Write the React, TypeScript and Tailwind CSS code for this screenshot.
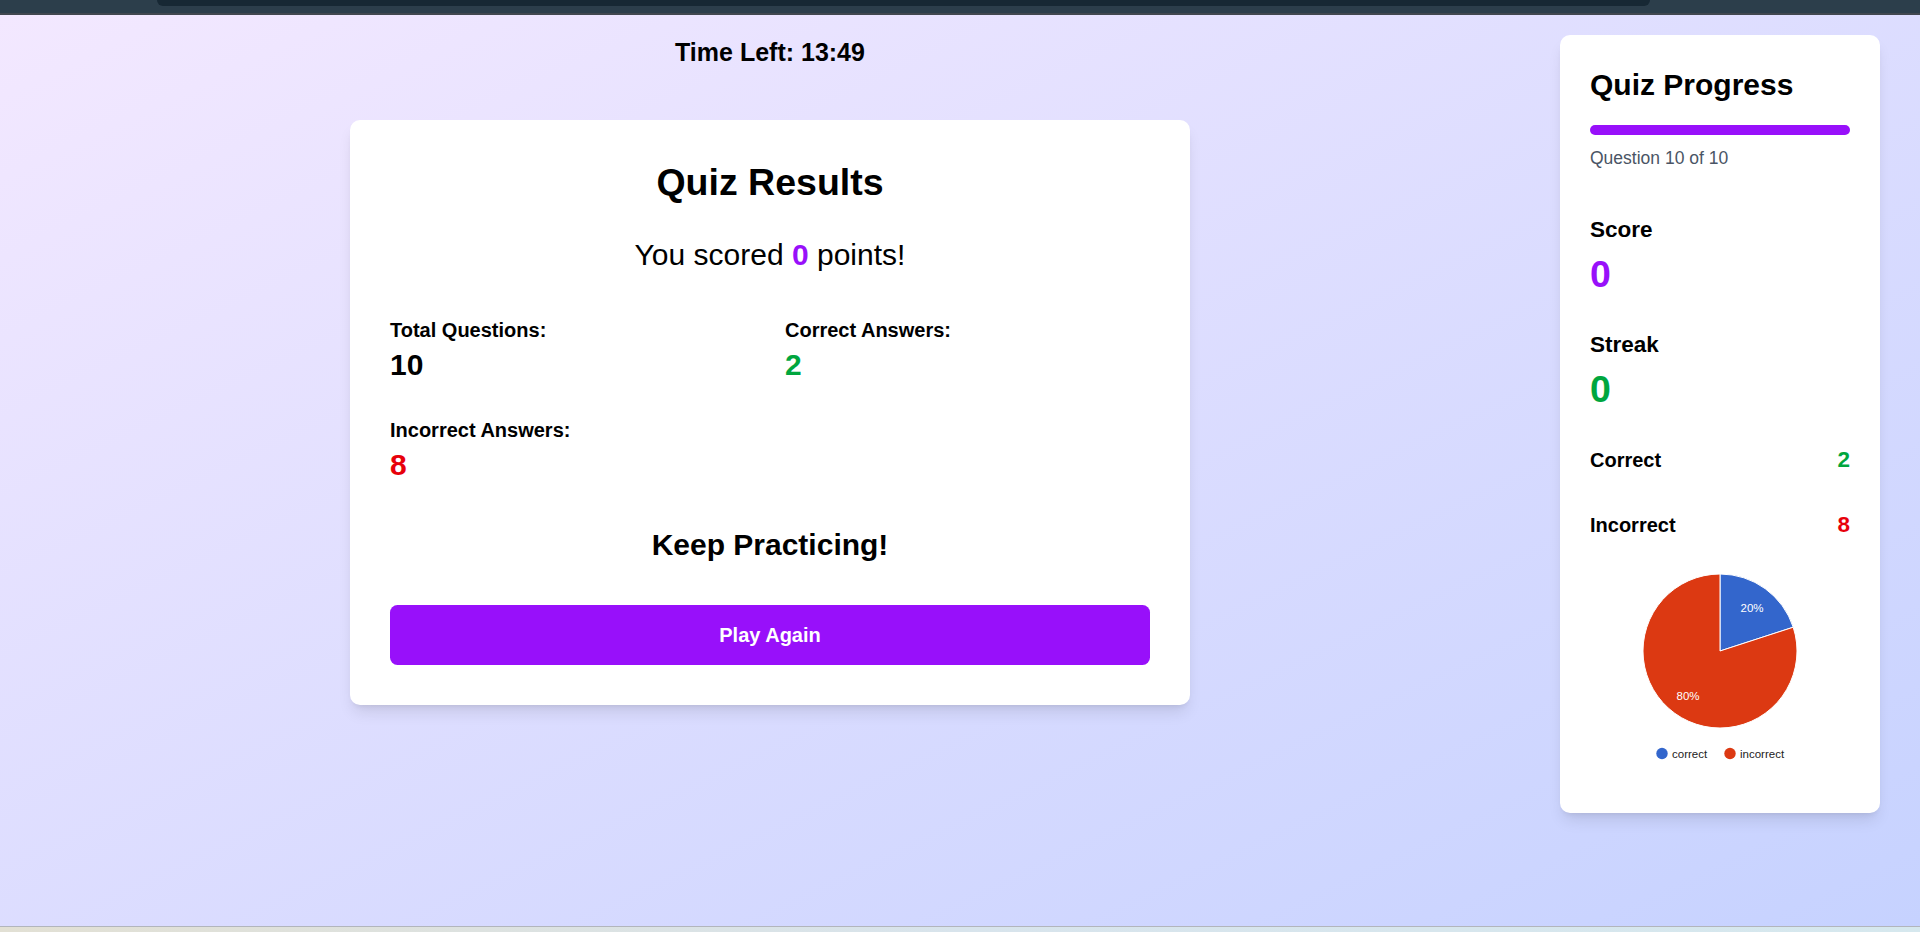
import React from "react";

const font = "font-['Liberation_Sans',Arial,Helvetica,sans-serif]";

function PieChart() {
  // 20% correct / 80% incorrect, drawn like a Google pie chart
  const cx = 130;
  const cy = 109;
  const r = 77;
  const ex = cx + r * Math.sin((72 * Math.PI) / 180);
  const ey = cy - r * Math.cos((72 * Math.PI) / 180);
  return (
    <svg width="260" height="241" viewBox="0 0 260 241" className="block">
      <path d={`M${cx},${cy} L${cx},${cy - r} A${r},${r} 0 0,1 ${ex},${ey} Z`} fill="#3366cc" stroke="#ffffff" strokeWidth="1" />
      <path d={`M${cx},${cy} L${ex},${ey} A${r},${r} 0 1,1 ${cx},${cy - r} Z`} fill="#dc3912" stroke="#ffffff" strokeWidth="1" />
      <text x="162" y="69.5" textAnchor="middle" fontSize="11.5" fill="#ffffff" fontFamily="Liberation Sans, Arial, sans-serif">
        20%
      </text>
      <text x="98" y="157.5" textAnchor="middle" fontSize="11.5" fill="#ffffff" fontFamily="Liberation Sans, Arial, sans-serif">
        80%
      </text>
      {/* legend */}
      <circle cx="72" cy="211.5" r="5.7" fill="#3366cc" />
      <text x="82" y="215.5" fontSize="11.5" fill="#222222" fontFamily="Liberation Sans, Arial, sans-serif">
        correct
      </text>
      <circle cx="140" cy="211.5" r="5.7" fill="#dc3912" />
      <text x="150" y="215.5" fontSize="11.5" fill="#222222" fontFamily="Liberation Sans, Arial, sans-serif">
        incorrect
      </text>
    </svg>
  );
}

function Stat({ label, value, color }: { label: string; value: string; color: string }) {
  return (
    <div>
      <div className="text-[20px] leading-[30px] font-bold">{label}</div>
      <div className={`text-[30px] leading-[40px] font-bold ${color}`}>{value}</div>
    </div>
  );
}

export default function App() {
  return (
    <div className={`flex h-[932px] flex-col overflow-hidden text-black ${font}`}>
      {/* browser chrome strip */}
      <div className="relative h-[13px] bg-[#2c3e4b]">
        <div className="absolute left-[157px] top-0 h-[6px] w-[1493px] rounded-b-[8px] bg-[#172834]" />
      </div>
      <div className="h-[2px] bg-[#41474f]" />

      {/* page */}
      <div className="flex flex-1 gap-[40px] bg-[linear-gradient(to_bottom_right,#f3e8ff,#c6d2ff)] pl-[20px] pr-[40px] pt-[20px]">
        {/* main column */}
        <div className="flex flex-1 flex-col items-center">
          <div className="mb-[50px] text-[25px] leading-[35px] font-bold">Time Left: 13:49</div>

          <div className="w-[840px] rounded-[10px] bg-white p-[40px] shadow-lg">
            <h2 className="mb-[30px] text-center text-[37.5px] leading-[45px] font-bold">Quiz Results</h2>
            <p className="mb-[40px] text-center text-[30px] leading-[40px]">
              You scored <span className="font-bold text-purple-600">0</span> points!
            </p>

            <div className="grid grid-cols-2 gap-[30px]">
              <Stat label="Total Questions:" value="10" color="text-black" />
              <Stat label="Correct Answers:" value="2" color="text-green-600" />
              <Stat label="Incorrect Answers:" value="8" color="text-red-600" />
            </div>

            <h3 className="mt-[40px] text-center text-[30px] leading-[40px] font-bold">Keep Practicing!</h3>

            <button className="mt-[40px] w-full rounded-[7.5px] bg-purple-600 py-[15px] text-[20px] leading-[30px] font-bold text-white">
              Play Again
            </button>
          </div>
        </div>

        {/* sidebar */}
        <div className="w-[320px] self-start rounded-[10px] bg-white p-[30px] shadow-lg">
          <h2 className="mb-[20px] text-[30px] leading-[40px] font-bold">Quiz Progress</h2>
          <div className="h-[10px] w-full rounded-full bg-purple-600" />
          <p className="mt-[11px] text-[17.5px] leading-[25px] text-gray-600">Question 10 of 10</p>

          <div className="mt-[41px]">
            <div className="text-[22.5px] leading-[35px] font-bold">Score</div>
            <div className="mt-[5px] text-[37.5px] leading-[45px] font-bold text-purple-600">0</div>
          </div>

          <div className="mt-[30px]">
            <div className="text-[22.5px] leading-[35px] font-bold">Streak</div>
            <div className="mt-[5px] text-[37.5px] leading-[45px] font-bold text-green-600">0</div>
          </div>

          <div className="mt-[30px] flex h-[35px] items-center justify-between">
            <span className="text-[20px] font-bold">Correct</span>
            <span className="text-[22.5px] font-bold text-green-600">2</span>
          </div>

          <div className="mt-[30px] flex h-[35px] items-center justify-between">
            <span className="text-[20px] font-bold">Incorrect</span>
            <span className="text-[22.5px] font-bold text-red-600">8</span>
          </div>

          <PieChart />
        </div>
      </div>

      {/* bottom strip */}
      <div className="h-[1px] bg-[#b2b5bc]" />
      <div className="h-[5px] bg-[linear-gradient(to_right,#e2e0d4,#d8e4ec,#d6e8ee)]" />
    </div>
  );
}
